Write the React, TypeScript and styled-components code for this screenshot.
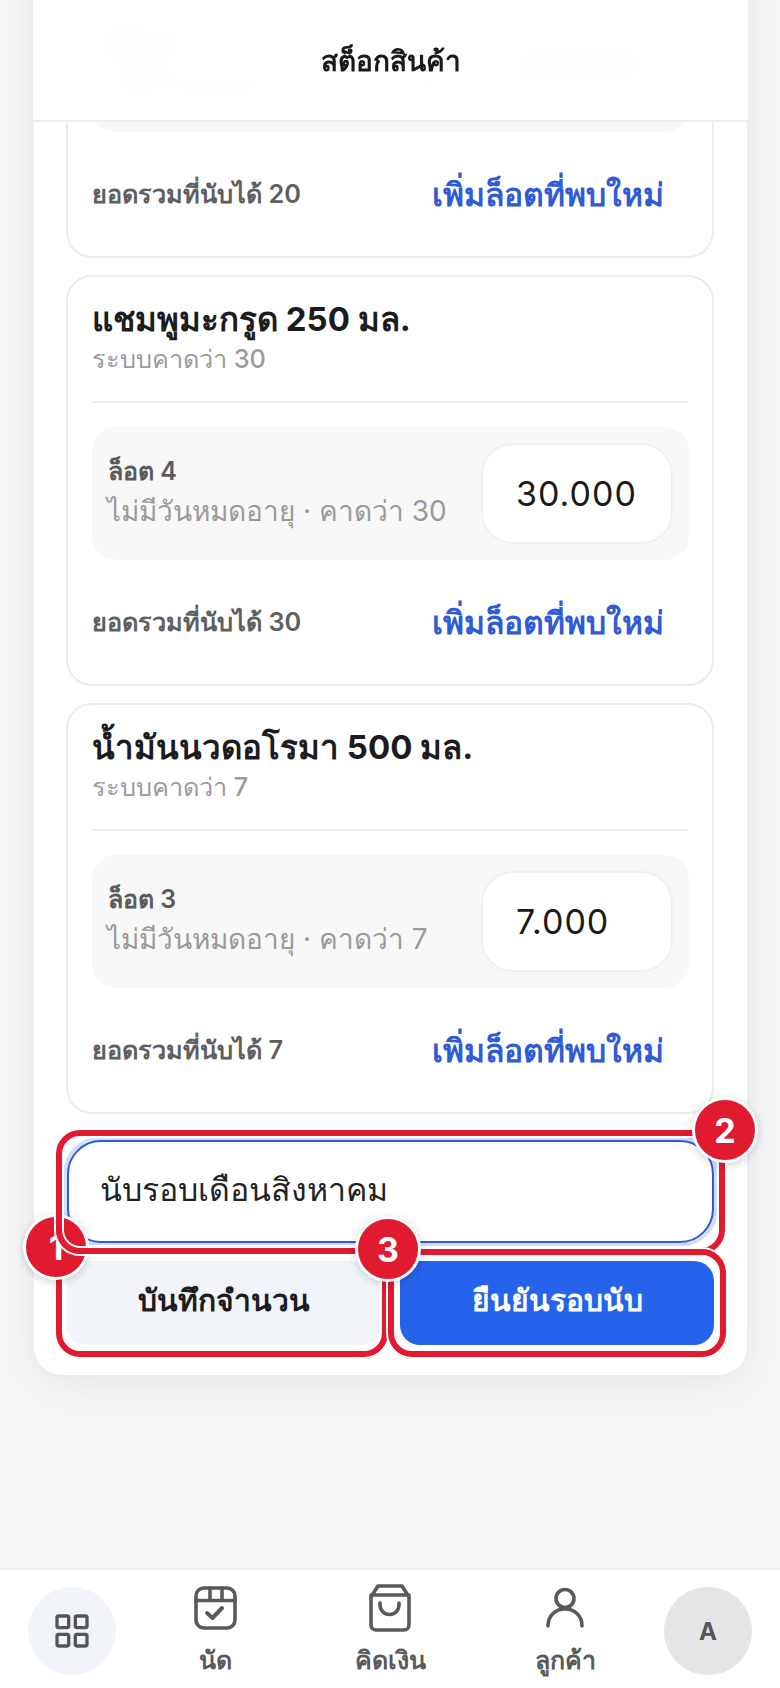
import styled, { createGlobalStyle } from "styled-components";
import { LayoutGrid } from "lucide-react";

const GlobalStyle = createGlobalStyle`
  html, body {
    margin: 0;
    padding: 0;
    background: #f6f7f9;
    font-family: "Inter", "Noto Sans", "Liberation Sans", sans-serif;
  }
  * {
    box-sizing: border-box;
  }
`;

const Page = styled.div`
  width: 780px;
  height: 1688px;
  display: flex;
  flex-direction: column;
  overflow: hidden;
`;

const Main = styled.main`
  position: relative;
  flex: 1;
  padding: 0 33px 0 34px;
`;

const TopBar = styled.header`
  position: absolute;
  top: 0;
  left: 33px;
  right: 32px;
  height: 122px;
  display: flex;
  align-items: center;
  justify-content: center;
  padding-top: 2px;
  background: rgba(255, 255, 255, 0.96);
  backdrop-filter: blur(12px);
  border-bottom: 2px solid #eeeeee;
  font-size: 28px;
  font-weight: 600;
  color: #1a1a1a;
  z-index: 1;
`;

const Panel = styled.section`
  margin-top: -58px;
  padding: 33px 33px 30px 32px;
  background: #ffffff;
  border-radius: 28px;
  box-shadow: 0 10px 40px rgba(0, 0, 0, 0.08);
`;

const CardList = styled.div`
  display: flex;
  flex-direction: column;
  gap: 17px;
`;

const Card = styled.article`
  padding: 22px 23px 32px 24px;
  background: #ffffff;
  border: 2px solid #ececec;
  border-radius: 26px;
`;

const CardHead = styled.div`
  padding-bottom: 24px;
  margin-bottom: 24px;
  border-bottom: 2px solid #f0f0f0;
`;

const Title = styled.h3`
  margin: 0 0 2px;
  font-size: 33px;
  line-height: 40px;
  font-weight: 700;
  color: #1c1c1e;
`;

const Expected = styled.div`
  font-size: 25.3px;
  line-height: 36px;
  font-weight: 500;
  color: #9b9b9b;
`;

const LotBox = styled.div`
  display: flex;
  align-items: center;
  justify-content: space-between;
  padding: 16px 16px 16px 15px;
  background: #f8f8f8;
  border-radius: 24px;
`;

const LotInfo = styled.div`
  padding-bottom: 3px;
`;

const LotName = styled.div`
  margin-bottom: 2px;
  padding-left: 1px;
  font-size: 25px;
  line-height: 36px;
  font-weight: 600;
  color: #5a5a5a;
`;

const LotMeta = styled.div`
  font-size: 28px;
  line-height: 40px;
  color: #9a9a9a;
`;

const QtyInput = styled.div`
  width: 192px;
  height: 101px;
  display: flex;
  align-items: center;
  padding-left: 33px;
  background: #ffffff;
  border: 2px solid #f1f1f1;
  border-radius: 32px;
  font-size: 34px;
  letter-spacing: 1px;
  color: #1a1a1a;
`;

const TotalRow = styled.div`
  display: flex;
  align-items: center;
  justify-content: space-between;
  height: 60px;
  margin-top: 32px;
  padding-right: 25px;
`;

const TotalText = styled.span`
  font-size: 25.3px;
  font-weight: 600;
  color: #5f5f5f;
`;

const AddLot = styled.span`
  font-size: 31.8px;
  font-weight: 600;
  color: #2f5bd8;
`;

const Footer = styled.div`
  display: flex;
  flex-direction: column;
  gap: 18px;
  margin-top: 26px;
  padding-left: 1px;
`;

const Marked = styled.div`
  position: relative;
  flex: 1;
`;

const Highlight = styled.div<{ $z: number; $top: number; $left: number; $right: number; $bottom: number }>`
  position: absolute;
  top: ${({ $top }) => $top}px;
  left: ${({ $left }) => $left}px;
  right: ${({ $right }) => $right}px;
  bottom: ${({ $bottom }) => $bottom}px;
  border: 6px solid #e01b2f;
  border-radius: 24px;
  box-shadow: 0 0 0 2px #ffffff, inset 0 0 0 2px #ffffff;
  z-index: ${({ $z }) => $z};
  pointer-events: none;
`;

const Badge = styled.div<{ $side: "left" | "right" }>`
  position: absolute;
  top: -39px;
  ${({ $side }) => $side}: -39px;
  width: 66px;
  height: 66px;
  display: flex;
  align-items: center;
  justify-content: center;
  background: #e01b2f;
  border: 3px solid #ffffff;
  border-radius: 50%;
  box-shadow: 0 2px 8px rgba(0, 0, 0, 0.18);
  font-size: 34px;
  font-weight: 700;
  color: #ffffff;
`;

const NoteField = styled.div`
  height: 103px;
  display: flex;
  align-items: center;
  padding: 0 0 5px 31px;
  background: #ffffff;
  border: 2px solid #2f5bd8;
  border-radius: 34px;
  box-shadow: 0 0 0 4px rgba(37, 99, 235, 0.2);
  font-size: 32px;
  color: #222222;
`;

const ButtonRow = styled.div`
  display: flex;
  gap: 19px;
`;

const ActionButton = styled.button<{ $primary?: boolean }>`
  width: 100%;
  height: 84px;
  padding: 0 0 5px;
  border: none;
  border-radius: 20px;
  background: ${({ $primary }) => ($primary ? "#2563eb" : "#f1f5f9")};
  color: ${({ $primary }) => ($primary ? "#ffffff" : "#1c1c1e")};
  font-family: inherit;
  font-size: 30px;
  font-weight: 700;
`;

const BottomNav = styled.nav`
  height: 120px;
  display: flex;
  align-items: flex-start;
  justify-content: space-between;
  padding: 14px 28px 0;
  background: #ffffff;
  border-top: 2px solid #f0f0f0;
`;

const RoundButton = styled.div<{ $bg: string }>`
  width: 88px;
  height: 88px;
  margin-top: 3px;
  display: flex;
  align-items: center;
  justify-content: center;
  border-radius: 50%;
  background: ${({ $bg }) => $bg};
  color: #555555;
  font-size: 24px;
  font-weight: 700;
`;

const Tabs = styled.div`
  display: flex;
`;

const Tab = styled.div`
  width: 175px;
  display: flex;
  flex-direction: column;
  align-items: center;
  color: #5a5a5a;
  font-size: 25px;
  line-height: 40px;
  font-weight: 600;
`;

const TabIcon = styled.div`
  height: 48px;
  margin-bottom: 8px;
  display: flex;
  align-items: center;
`;

const products = [
  { lot: "ล็อต 5", expected: 20 },
  { title: "แชมพูมะกรูด 250 มล.", lot: "ล็อต 4", expected: 30 },
  { title: "น้ำมันนวดอโรมา 500 มล.", lot: "ล็อต 3", expected: 7 },
];

const CalendarIcon = () => (
  <svg width="43" height="44" viewBox="0 0 43 44" fill="none" stroke="currentColor" strokeWidth="3.6" strokeLinecap="round" strokeLinejoin="round">
    <rect x="2" y="2" width="39" height="40" rx="8" />
    <path d="M2 14.5H41M16 2V14.5M28 2V14.5" />
    <path d="M13 27L18.5 32L28 22" strokeWidth="4" />
  </svg>
);

const BagIcon = () => (
  <svg width="44" height="48" viewBox="0 0 44 48" fill="none" stroke="currentColor" strokeWidth="3.6" strokeLinecap="round" strokeLinejoin="round">
    <path d="M3 13L10 2H34L41 13V41A5 5 0 0 1 36 46H8A5 5 0 0 1 3 41Z" />
    <path d="M3 11H41" />
    <path d="M12 19V21A9.5 9.5 0 0 0 31 21V19" />
  </svg>
);

const PersonIcon = () => (
  <svg width="40" height="42" viewBox="0 0 40 42" fill="none" stroke="currentColor" strokeWidth="3.6" strokeLinecap="round" strokeLinejoin="round">
    <circle cx="20" cy="11.5" r="9" />
    <path d="M3 39C3 29 10 22 20 22S37 29 37 39" />
  </svg>
);

const App = () => {
  return (
    <Page>
      <GlobalStyle />
      <Main>
        <TopBar>สต็อกสินค้า</TopBar>
        <Panel>
          <CardList>
            {products.map((product) => (
              <Card key={product.lot}>
                {product.title && (
                  <CardHead>
                    <Title>{product.title}</Title>
                    <Expected>ระบบคาดว่า {product.expected}</Expected>
                  </CardHead>
                )}
                <LotBox>
                  <LotInfo>
                    <LotName>{product.lot}</LotName>
                    <LotMeta>ไม่มีวันหมดอายุ · คาดว่า {product.expected}</LotMeta>
                  </LotInfo>
                  <QtyInput>{product.expected}.000</QtyInput>
                </LotBox>
                <TotalRow>
                  <TotalText>ยอดรวมที่นับได้ {product.expected}</TotalText>
                  <AddLot>เพิ่มล็อตที่พบใหม่</AddLot>
                </TotalRow>
              </Card>
            ))}
          </CardList>
          <Footer>
            <Marked>
              <NoteField>นับรอบเดือนสิงหาคม</NoteField>
              <Highlight $z={2} $top={-10} $left={-11} $right={-11} $bottom={-11}>
                <Badge $side="right">2</Badge>
              </Highlight>
            </Marked>
            <ButtonRow>
              <Marked>
                <ActionButton>บันทึกจำนวน</ActionButton>
                <Highlight $z={1} $top={-14} $left={-11} $right={-7} $bottom={-12}>
                  <Badge $side="left">1</Badge>
                </Highlight>
              </Marked>
              <Marked>
                <ActionButton $primary>ยืนยันรอบนับ</ActionButton>
                <Highlight $z={3} $top={-12} $left={-12} $right={-12} $bottom={-12}>
                  <Badge $side="left">3</Badge>
                </Highlight>
              </Marked>
            </ButtonRow>
          </Footer>
        </Panel>
      </Main>
      <BottomNav>
        <RoundButton $bg="#f1f5f9">
          <LayoutGrid size={40} strokeWidth={2} />
        </RoundButton>
        <Tabs>
          <Tab><TabIcon><CalendarIcon /></TabIcon>นัด</Tab>
          <Tab><TabIcon><BagIcon /></TabIcon>คิดเงิน</Tab>
          <Tab><TabIcon><PersonIcon /></TabIcon>ลูกค้า</Tab>
        </Tabs>
        <RoundButton $bg="#e6e5e5">A</RoundButton>
      </BottomNav>
    </Page>
  );
};

export default App;
